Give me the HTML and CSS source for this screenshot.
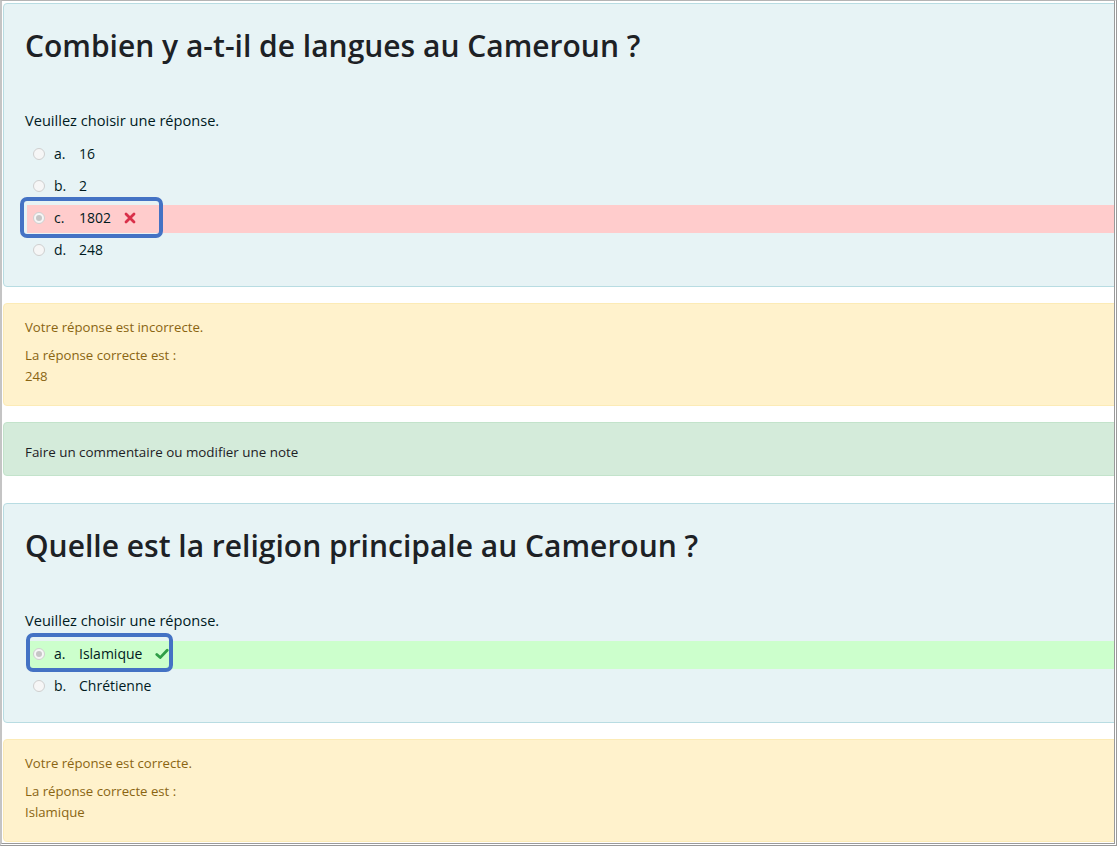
FILE: index.html
```html
<!DOCTYPE html>
<html lang="fr">

<head>
    <meta charset="UTF-8">
    <meta name="viewport" content="width=device-width, initial-scale=1.0">
    <title>Relecture du test</title>
    <link rel="stylesheet" href="styles.css">
</head>

<body>
    <div class="screen">
        <div class="page">

            <div class="que">
                <div class="formulation">
                    <h3 class="qtext">Combien y a-t-il de langues au Cameroun ?</h3>
                    <div class="prompt">Veuillez choisir une réponse.</div>
                    <div class="answer">
                        <div class="r0"><span class="radio"></span><span class="num">a.</span><span class="label">16</span></div>
                        <div class="r0"><span class="radio"></span><span class="num">b.</span><span class="label">2</span></div>
                        <div class="r0 incorrect">
                            <span class="radio checked"></span><span class="num">c.</span><span class="label">1802</span>
                            <svg class="icon" width="12" height="12" viewBox="0 0 12 12">
                                <path d="M2 2 L10 10 M10 2 L2 10" stroke="#d9304a" stroke-width="2.8" stroke-linecap="round" fill="none"/>
                            </svg>
                            <span class="mark mark-wrong"></span>
                        </div>
                        <div class="r0"><span class="radio"></span><span class="num">d.</span><span class="label">248</span></div>
                    </div>
                </div>

                <div class="outcome">
                    <p class="feedback">Votre réponse est incorrecte.</p>
                    <p class="rightanswer">La réponse correcte est :<br>248</p>
                </div>

                <div class="comment">Faire un commentaire ou modifier une note</div>
            </div>

            <div class="que">
                <div class="formulation">
                    <h3 class="qtext">Quelle est la religion principale au Cameroun ?</h3>
                    <div class="prompt">Veuillez choisir une réponse.</div>
                    <div class="answer">
                        <div class="r0 correct">
                            <span class="radio checked"></span><span class="num">a.</span><span class="label">Islamique</span>
                            <svg class="icon" width="14" height="12" viewBox="0 0 14 12">
                                <path d="M1.8 6.4 L5.2 9.6 L12.2 2.2" stroke="#2f9e47" stroke-width="2.8" stroke-linecap="round" stroke-linejoin="round" fill="none"/>
                            </svg>
                            <span class="mark mark-right"></span>
                        </div>
                        <div class="r0"><span class="radio"></span><span class="num">b.</span><span class="label">Chrétienne</span></div>
                    </div>
                </div>

                <div class="outcome">
                    <p class="feedback">Votre réponse est correcte.</p>
                    <p class="rightanswer">La réponse correcte est :<br>Islamique</p>
                </div>
            </div>

        </div>
    </div>
</body>

</html>
```

FILE: styles.css
```css
body {
    margin: 0;
    background: #fff;
    font-family: "Open Sans", "Noto Sans", sans-serif;
    color: #001a1e;
}

.screen {
    width: 1117px;
    height: 846px;
    box-sizing: border-box;
    border-top: 1px solid #b4b4b4;
    border-left: 2px solid #c4c4c4;
    border-right: 3px double #9a9a9a;
    border-bottom: 3px double #9a9a9a;
    overflow: hidden;
}

/* the boxes run on past the right edge of the shot */
.page {
    padding: 2px 0 0 1px;
    margin-right: -40px;
}

.que {
    margin-bottom: 27px;
}

.formulation {
    background-color: #e7f3f5;
    border: 1px solid #b8dce2;
    border-radius: 4px;
    padding: 22px 21px 21px 21px;
    margin-bottom: 16px;
}

.qtext {
    margin: 0;
    font-size: 30px;
    font-weight: 600;
    line-height: 40px;
    color: #1d2125;
}

.prompt {
    margin-top: 43px;
    font-size: 14.6px;
    line-height: 22px;
}

.answer {
    margin-top: 10px;
    margin-left: 2px;
}

.r0 {
    position: relative;
    display: flex;
    align-items: center;
    height: 28px;
    margin-bottom: 4px;
    padding-left: 6px;
    font-size: 14px;
}

.r0:last-child {
    margin-bottom: 0;
}

.r0.incorrect {
    background-color: #fcc;
}

.r0.correct {
    background-color: #cfc;
}

.radio {
    width: 12px;
    height: 12px;
    border: 1px solid #cfcfcf;
    border-radius: 50%;
    background: #f6f6f6;
    box-sizing: border-box;
    display: flex;
    align-items: center;
    justify-content: center;
    margin-right: 9px;
    margin-bottom: 3px;
}

.radio.checked::after {
    content: "";
    width: 6px;
    height: 6px;
    border-radius: 50%;
    background: #c6c6c6;
}

.num {
    width: 25px;
    margin-bottom: 3px;
}

.label {
    margin-bottom: 3px;
}

.icon {
    margin-left: 13px;
    margin-bottom: 3px;
}

/* blue annotation frames drawn over the chosen answers */
.mark {
    position: absolute;
    border: 4px solid #4472c4;
    border-radius: 7px;
    pointer-events: none;
}

.mark-wrong {
    left: -7px;
    top: -8px;
    width: 135px;
    height: 33px;
}

.mark-right {
    left: -1px;
    top: -8px;
    width: 139px;
    height: 31px;
}

.outcome {
    background-color: #fff2cc;
    border: 1px solid #fcebb6;
    border-radius: 4px;
    padding: 13px 21px 18px 21px;
    color: #8a6512;
    font-size: 13.2px;
    line-height: 21px;
    margin-bottom: 16px;
}

.outcome p {
    margin: 0;
}

.outcome .rightanswer {
    margin-top: 7px;
}

.comment {
    background-color: #d4ebda;
    border: 1px solid #c3e3cb;
    border-radius: 4px;
    padding: 19px 21px 12px 21px;
    font-size: 13.4px;
    line-height: 21px;
    color: #1d2125;
}
```
